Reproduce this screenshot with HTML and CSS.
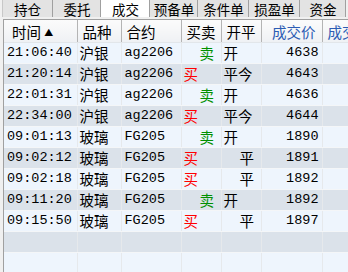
FILE: index.html
```html
<!DOCTYPE html>
<html lang="zh-CN">
<head>
  <meta charset="UTF-8" />
  <title>成交</title>
  <link rel="stylesheet" href="styles.css">
</head>
<body>

<!-- tab strip -->
<div class="tab-bar">
  <div class="tab w51">持仓</div>
  <div class="tab w48">委托</div>
  <div class="tab w49 active">成交</div>
  <div class="tab w48">预备单</div>
  <div class="tab w51">条件单</div>
  <div class="tab w51">损盈单</div>
  <div class="tab w46">资金</div>
</div>

<!-- deals list -->
<div class="grid-frame">
  <table class="deals">
    <colgroup>
      <col class="c-time"><col class="c-kind"><col class="c-code"><col class="c-side"><col class="c-oc"><col class="c-price"><col class="c-more">
    </colgroup>
    <thead>
      <tr>
        <th class="cn first">时间 <span class="sort">▲</span></th>
        <th class="cn">品种</th>
        <th class="cn">合约</th>
        <th class="cn">买卖</th>
        <th class="cn">开平</th>
        <th class="cn num blue">成交价</th>
        <th class="cn blue">成交量</th>
      </tr>
    </thead>
    <tbody>
      <tr><td>21:06:40</td><td class="cn">沪银</td><td>ag2206</td><td class="cn sell">卖</td><td class="cn">开</td><td class="num">4638</td><td></td></tr>
      <tr><td>21:20:14</td><td class="cn">沪银</td><td>ag2206</td><td class="cn buy">买</td><td class="cn">平今</td><td class="num">4643</td><td></td></tr>
      <tr><td>22:01:31</td><td class="cn">沪银</td><td>ag2206</td><td class="cn sell">卖</td><td class="cn">开</td><td class="num">4636</td><td></td></tr>
      <tr><td>22:34:00</td><td class="cn">沪银</td><td>ag2206</td><td class="cn buy">买</td><td class="cn">平今</td><td class="num">4644</td><td></td></tr>
      <tr><td>09:01:13</td><td class="cn">玻璃</td><td>FG205</td><td class="cn sell">卖</td><td class="cn">开</td><td class="num">1890</td><td></td></tr>
      <tr><td>09:02:12</td><td class="cn">玻璃</td><td>FG205</td><td class="cn buy">买</td><td class="cn shift">平</td><td class="num">1891</td><td></td></tr>
      <tr><td>09:02:18</td><td class="cn">玻璃</td><td>FG205</td><td class="cn buy">买</td><td class="cn shift">平</td><td class="num">1892</td><td></td></tr>
      <tr><td>09:11:20</td><td class="cn">玻璃</td><td>FG205</td><td class="cn sell">卖</td><td class="cn">开</td><td class="num">1892</td><td></td></tr>
      <tr><td>09:15:50</td><td class="cn">玻璃</td><td>FG205</td><td class="cn buy">买</td><td class="cn shift">平</td><td class="num">1897</td><td></td></tr>
      <tr><td></td><td></td><td></td><td></td><td></td><td></td><td></td></tr>
      <tr><td></td><td></td><td></td><td></td><td></td><td></td><td></td></tr>
    </tbody>
  </table>
</div>

</body>
</html>
```

FILE: styles.css
```css
/* General */
body {
  margin: 0;
  width: 348px;
  height: 272px;
  overflow: hidden;
  background-color: #f0f0f0;
  font-family: "Liberation Mono", "Noto Sans CJK SC", monospace;
  font-size: 13.5px;
  color: #000000;
}

/* Tab strip */
.tab-bar {
  display: flex;
  height: 19px;
  padding-left: 2px;
  background-color: #f0f0f0;
}

/* tab face is only 17px tall, the last 2px show the strip colour */
.tab {
  box-sizing: border-box;
  height: 19px;
  padding-top: 1px;
  line-height: 17px;
  text-align: center;
  font-family: "Noto Sans CJK SC", sans-serif;
  font-size: 13.5px;
  background:
    linear-gradient(#a0a0a0, #a0a0a0) right top / 1px 17px no-repeat,
    linear-gradient(#e3e3e3, #e3e3e3) left top / 100% 17px no-repeat;
}

.tab:first-child {
  background:
    linear-gradient(#c8c8c8, #c8c8c8) left top / 1px 17px no-repeat,
    linear-gradient(#a0a0a0, #a0a0a0) right top / 1px 17px no-repeat,
    linear-gradient(#e3e3e3, #e3e3e3) left top / 100% 17px no-repeat;
}

.tab.active {
  background:
    linear-gradient(#a0a0a0, #a0a0a0) right top / 1px 17px no-repeat,
    linear-gradient(#ffffff, #ffffff) left top / 100% 17px no-repeat;
}

.w46 { width: 46px; }
.w48 { width: 48px; }
.w49 { width: 49px; }
.w51 { width: 51px; }

/* Deals grid */
.grid-frame {
  margin-left: 3px;
  overflow: hidden;
  border-top: 1px solid #a0a0a0;
  border-left: 1px solid #a0a0a0;
  background-color: #eef5fd;
}

.deals {
  table-layout: fixed;
  border-collapse: collapse;
  width: 413px;
}

.c-time { width: 73px; }
.c-kind { width: 44px; }
.c-code { width: 60px; }
.c-side { width: 40px; }
.c-oc { width: 40px; }
.c-price { width: 61px; }
.c-more { width: 95px; }

.deals th {
  height: 22px;
  padding: 0 0 0 5px;
  text-align: left;
  font-weight: normal;
  white-space: nowrap;
  overflow: hidden;
  background: linear-gradient(#fbfbfb, #eff1f4);
  border-right: 1px solid #b4b4b4;
  border-bottom: 1px solid #e2e6ea;
}

.deals th.first {
  padding-left: 8px;
}

.deals th.num {
  text-align: right;
  padding-right: 6px;
}

.sort {
  font-size: 9px;
  vertical-align: 2px;
}

.blue {
  color: #2c5cb4;
}

.deals td {
  height: 20px;
  padding: 0 0 0 3px;
  line-height: 20px;
  white-space: nowrap;
  overflow: hidden;
  border-right: 1px solid #e6e9ec;
  border-bottom: 1px solid #f4f6f8;
}

.deals tbody tr:nth-child(even) td {
  background-color: #dbe2ea;
}

.deals td.cn {
  padding-left: 2px;
}

.cn {
  font-family: "Noto Sans CJK SC", sans-serif;
  font-size: 14.5px;
}

.deals td.num {
  text-align: right;
  padding-right: 3px;
}

.deals td.buy {
  color: #ff0000;
}

.deals td.sell {
  color: #009000;
  padding-left: 18px;
}

.deals td.shift {
  padding-left: 18px;
}
```
